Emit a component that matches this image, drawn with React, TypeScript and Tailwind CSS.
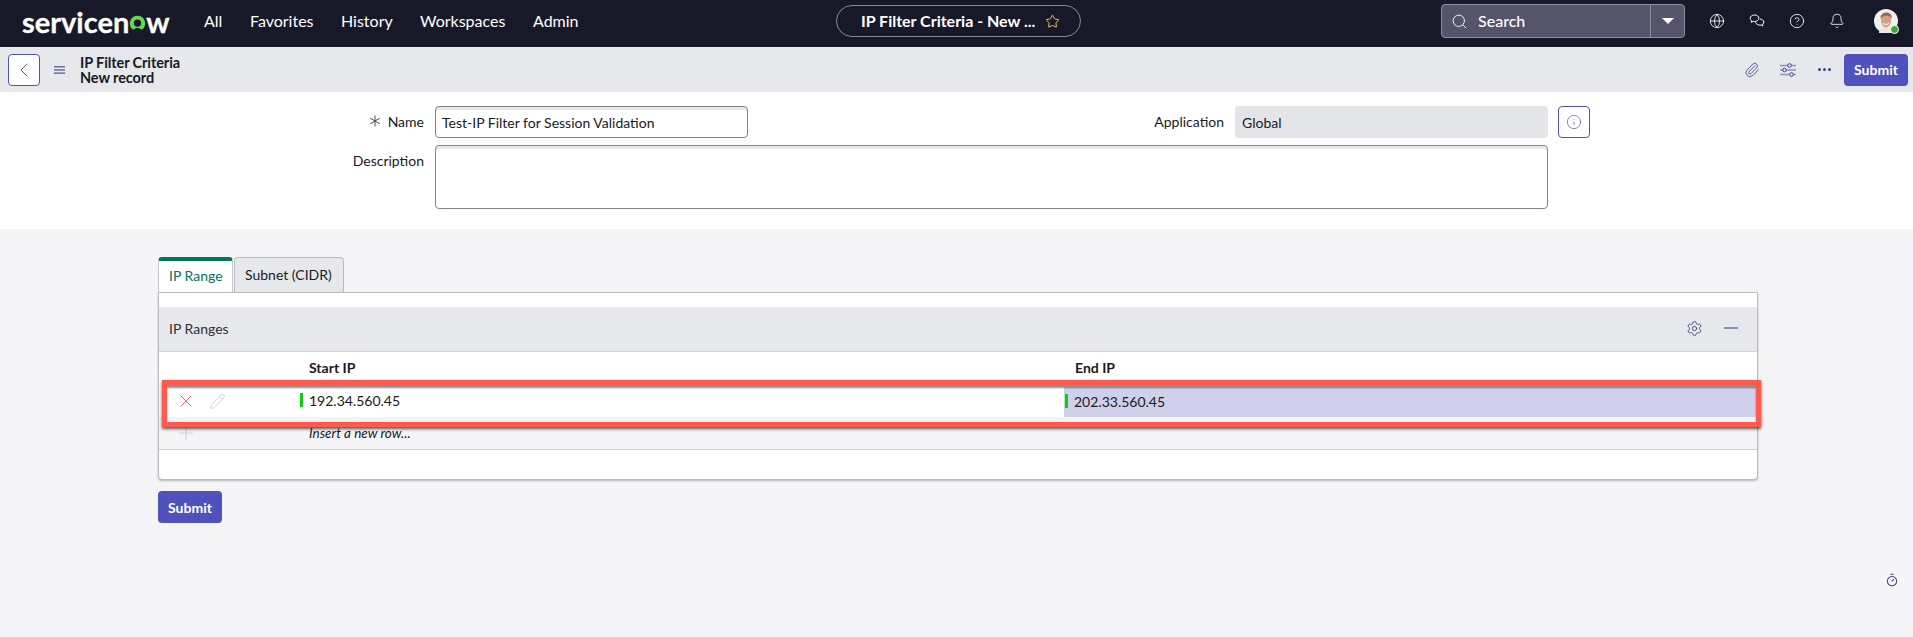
import { Bell, ChevronLeft, CircleHelp, Globe, Info, Minus, Paperclip, Pencil, Plus, Search, Settings, Star, Timer, X } from "lucide-react";

const navLinks = [
  { label: "All", w: "w-[18px]" },
  { label: "Favorites", w: "w-[63px]" },
  { label: "History", w: "w-[51px]" },
  { label: "Workspaces", w: "w-[85px]" },
  { label: "Admin", w: "w-[45px]" },
];

const Avatar = () => (
  <div className="relative w-6 h-6">
    <svg viewBox="0 0 24 24" className="w-6 h-6">
      <circle cx="12" cy="12" r="12" fill="#f1f0ee" />
      <path d="M5 24c0-4 3-5.500 7-5.500s7 1.500 7 5.500z" fill="#e9e6e3" />
      <ellipse cx="12" cy="11.500" rx="5" ry="7" fill="#d3a088" />
      <path d="M6.500 10c-.5-4 2.500-6.500 6-6.500s6 2.500 5 6.500c-1-2-2.500-3.200-5-3.200s-5 1.200-6 3.200z" fill="#8c6f56" />
      <path d="M9 14.500c2 1.300 4 1.300 6 0" stroke="#f4efe9" strokeWidth="1.200" fill="none" />
    </svg>
    <div className="absolute -right-px -bottom-px w-[9px] h-[9px] rounded-full bg-[#3fa535] border border-white" />
  </div>
);

const ChatIcon = () => (
  <svg viewBox="0 0 16 16" className="w-4 h-4" fill="none" stroke="white" strokeWidth="1">
    <path d="M5.500 2C3 2 1.200 3.300 1.200 5.200c0 1 .5 1.800 1.300 2.400L2.200 9.300l1.900-.9c.4.100.9.100 1.400.100 2.500 0 4.300-1.400 4.300-3.300S8 2 5.500 2z" />
    <path d="M10.800 6c2.200.1 4 1.300 4 3 0 .9-.5 1.700-1.200 2.200l.3 1.700-1.800-.9c-2.600.5-5.200-.6-5.500-2.600" />
  </svg>
);

const SlidersIcon = () => (
  <svg viewBox="0 0 16 14" className="w-4 h-[14px]" fill="none">
    <path d="M0 2.500h16M0 7h16M0 11.500h16" stroke="#8f90b5" strokeWidth="1.400" />
    <circle cx="9.500" cy="2.500" r="1.800" fill="#e6e8ec" stroke="#3f4184" strokeWidth="1" />
    <circle cx="4.500" cy="7" r="1.800" fill="#e6e8ec" stroke="#3f4184" strokeWidth="1" />
    <circle cx="11.500" cy="11.500" r="1.800" fill="#e6e8ec" stroke="#3f4184" strokeWidth="1" />
  </svg>
);

const ServiceNowLogo = () => (
  <div className="flex items-center h-[30px] w-[150px] font-['Lato',sans-serif] text-[29px] font-bold leading-none tracking-[0px] text-white [-webkit-text-stroke:0.3px_white]">
    <span>servicen</span>
    <svg viewBox="0 0 20 20" className="w-[17px] h-[17px] mt-[5px] shrink-0">
      <path d="M10 1a9 9 0 0 0-6 15.700c.6.500 1.400.6 2 .1a6.500 6.500 0 0 1 8 0c.6.500 1.400.4 2-.1A9 9 0 0 0 10 1zm0 12.800A4.300 4.300 0 1 1 10 5.200a4.300 4.300 0 0 1 0 8.600z" fill="#62d84e" />
    </svg>
    <span>w</span>
  </div>
);

const fieldClass = "h-8 rounded border border-[#82838f] bg-white shadow-[inset_0_3px_0_#e6e8ec]";

const App = () => (
  <div className="w-[1913px] h-[637px] overflow-hidden bg-[#f5f5f8] font-['Lato',sans-serif] text-[14px] text-[#181a26]">
    {/* Top nav */}
    <div className="h-[47px] bg-[#181928] flex items-center pb-[5px] text-white">
      <div className="ml-[22px] w-[182px]">
        <ServiceNowLogo />
      </div>
      <div className="flex w-[632px] gap-7 text-[16px]">
        {navLinks.map((l) => (
          <span key={l.label} className={l.w}>{l.label}</span>
        ))}
      </div>
      <div className="w-[245px] h-8 rounded-full border border-[#8a8b98] flex items-center pl-6 gap-2.5 text-[16px] font-bold">
        <span className="whitespace-nowrap">IP Filter Criteria - New ...</span>
        <Star className="w-[15px] h-[15px] text-[#f5cd62]" strokeWidth={1.5} />
      </div>
      <div className="ml-[360px] w-[244px] h-[34px] rounded-[4px] border border-[#8d8ca0] bg-[#56546b] flex items-center">
        <Search className="ml-[9px] w-[17px] h-[17px]" strokeWidth={1.25} />
        <span className="ml-2.5 flex-1 text-[16px] font-medium">Search</span>
        <div className="w-[34px] h-full border-l border-[#8d8ca0] flex items-center justify-center">
          <div className="w-0 h-0 border-l-[6px] border-r-[6px] border-t-[6px] border-l-transparent border-r-transparent border-t-white" />
        </div>
      </div>
      <div className="ml-6 flex items-center gap-6">
        <Globe className="w-4 h-4" strokeWidth={1.25} />
        <ChatIcon />
        <CircleHelp className="w-4 h-4" strokeWidth={1.25} />
        <Bell className="w-4 h-4" strokeWidth={1.25} />
      </div>
      <div className="ml-[29px]">
        <Avatar />
      </div>
    </div>

    {/* Record bar */}
    <div className="h-[45px] bg-[#e6e8ec] flex items-center pl-2 pr-[5px]">
      <div className="w-8 h-8 rounded border border-[#4f52bd] bg-white flex items-center justify-center">
        <ChevronLeft className="w-6 h-6 text-[#4f52bd]" strokeWidth={1} />
      </div>
      <svg viewBox="0 0 11 8" className="ml-3.5 w-[11px] h-2" fill="#6d6f93">
        <rect width="11" height="1.500" />
        <rect y="3.200" width="11" height="1.500" />
        <rect y="6.400" width="11" height="1.500" />
      </svg>
      <div className="ml-[15px] flex-1 text-[14.5px] font-bold leading-[15px] tracking-[-0.1px]">
        <div>IP Filter Criteria</div>
        <div>New record</div>
      </div>
      <div className="flex items-center gap-5 text-[#3f4184] mr-3">
        <Paperclip className="w-4 h-4" strokeWidth={1.25} />
        <SlidersIcon />
        <span className="flex w-4 justify-center gap-[2px]">
          <span className="w-[3px] h-[3px] rounded-full bg-[#3f4184]" />
          <span className="w-[3px] h-[3px] rounded-full bg-[#3f4184]" />
          <span className="w-[3px] h-[3px] rounded-full bg-[#3f4184]" />
        </span>
      </div>
      <button className="w-16 h-8 rounded bg-[#4f52bd] text-white text-[14px] font-bold">Submit</button>
    </div>

    {/* Form */}
    <div className="h-[137px] bg-white pt-3.5">
      <div className="flex items-center">
        <div className="w-[424px] text-right flex justify-end items-center gap-[7px] pb-[2px]">
          <svg viewBox="0 0 12 12" className="w-3 h-3" stroke="#3a3c48" strokeWidth="0.9">
            <path d="M6 0.500v11M1.200 3.200l9.600 5.600M10.800 3.200l-9.600 5.600" />
          </svg>
          <span>Name</span>
        </div>
        <div className={`ml-[11px] w-[313px] ${fieldClass} flex items-center px-[6px]`}>Test-IP Filter for Session Validation</div>
        <div className="w-[476px] text-right pb-[2px]">Application</div>
        <div className="ml-[11px] w-[313px] h-8 rounded bg-[#e4e5e9] flex items-center px-[7px]">Global</div>
        <div className="ml-2.5 w-8 h-8 rounded border border-[#4f52bd] flex items-center justify-center">
          <Info className="w-4 h-4 text-[#6a6dc9]" strokeWidth={1.25} />
        </div>
      </div>
      <div className="flex mt-[7px]">
        <div className="w-[424px] text-right pt-[5px]">Description</div>
        <div className={`ml-[11px] w-[1113px] h-16 ${fieldClass}`} />
      </div>
    </div>

    {/* Tabs and related list */}
    <div className="ml-[158px] w-[1600px] mt-7 text-[14px]">
      <div className="flex h-[35px]">
        <div className="w-[75px] rounded-t border-t-4 border-[#00755f] bg-white text-[#00755f] pl-[10px] pt-[4px] border-x border-x-[#c6c8d0]">IP Range</div>
        <div className="ml-px w-[110px] rounded-t border border-b-0 border-[#b8bac4] bg-[#e6e8ec] pl-[10px] pt-[6px]">Subnet (CIDR)</div>
      </div>
      <div className="relative h-[188px] rounded-b border border-[#b8bac4] bg-white shadow-[0_1px_2px_rgba(0,0,0,0.25)] pt-[14px]">
        <div className="h-[45px] bg-[#e6e8ec] border-b border-[#cfd1d8] flex items-center pl-[10px] pr-[15px] pb-[2px] text-[#2d2f3c]">
          <span className="flex-1">IP Ranges</span>
          <Settings className="w-[17px] h-[17px] text-[#3f4184]" strokeWidth={1.25} />
          <Minus className="ml-[17px] w-[22px] h-[22px] text-[#8f90b5]" strokeWidth={2} />
        </div>
        <div className="grid grid-cols-[150px_766px_1fr] h-[30px] items-center font-bold">
          <div />
          <div>Start IP</div>
          <div>End IP</div>
        </div>
        <div className="grid grid-cols-[141px_764px_1fr] h-[35px]">
          <div className="flex items-center pt-[3px] pl-[17px] gap-[13px]">
            <X className="w-5 h-5 text-[#f0473c]" strokeWidth={1} />
            <Pencil className="w-[17px] h-[17px] text-[#c4c5ca]" strokeWidth={1} />
          </div>
          <div className="flex items-center pt-px">
            <span className="w-[3px] h-[14px] bg-[#0ecf0e]" />
            <span className="ml-[6px]">192.34.560.45</span>
          </div>
          <div className="mt-[5px] bg-[#d0d0ea] flex items-center pb-[2px]">
            <span className="ml-px w-[3px] h-[14px] bg-[#0ecf0e]" />
            <span className="ml-[6px]">202.33.560.45</span>
          </div>
        </div>
        <div className="grid grid-cols-[150px_1fr] h-[33px] items-center bg-[#f5f5f8] border-b border-[#cfd1d8] italic text-[13.5px]">
          <Plus className="ml-[16px] w-[22px] h-[22px] text-[#d0d1d6]" strokeWidth={1.25} />
          <span>Insert a new row...</span>
        </div>

        {/* Red annotation box */}
        <div className="absolute left-[3px] top-[87px] w-[1599px] h-[47px] border-[5px] border-[#ff5a4d] shadow-[0_2px_3px_rgba(0,0,0,0.65),inset_0_3px_2px_rgba(0,0,0,0.45)]" />
      </div>
      <button className="mt-[11px] w-16 h-8 rounded bg-[#4f52bd] text-white font-bold">Submit</button>
    </div>

    {/* Timer */}
    <div className="flex justify-end pr-[14px] mt-[50px]">
      <Timer className="w-[14px] h-[14px] text-[#3f4184]" strokeWidth={1.75} />
    </div>
  </div>
);

export default App;
